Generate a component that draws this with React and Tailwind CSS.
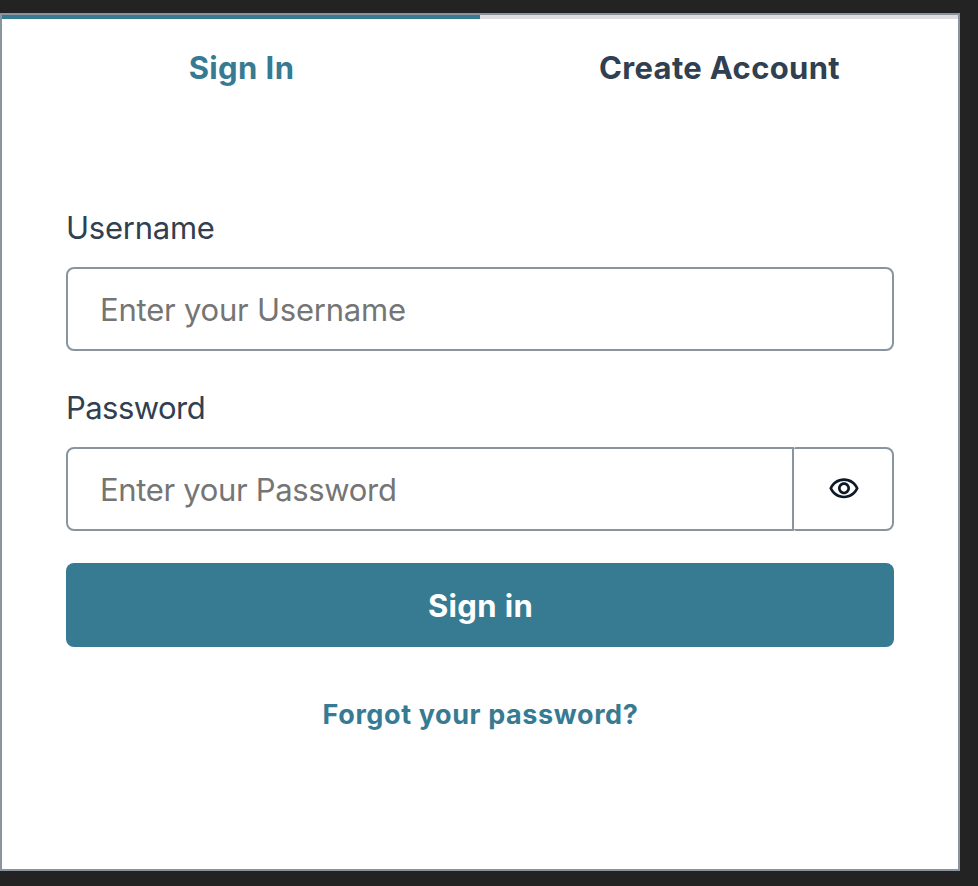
import { useState } from 'react';

function EyeIcon() {
  return (
    <svg className="size-8" viewBox="0 0 24 24" fill="currentColor" aria-hidden="true">
      <path d="M12 6c3.79 0 7.17 2.13 8.82 5.5C19.17 14.87 15.79 17 12 17s-7.17-2.13-8.82-5.5C4.83 8.13 8.21 6 12 6m0-2C7 4 2.73 7.11 1 11.5 2.73 15.89 7 19 12 19s9.27-3.11 11-7.5C21.27 7.11 17 4 12 4zm0 5c1.38 0 2.5 1.12 2.5 2.5S13.38 14 12 14s-2.5-1.12-2.5-2.5S10.62 9 12 9m0-2c-2.48 0-4.5 2.02-4.5 4.5S9.52 16 12 16s4.5-2.02 4.5-4.5S14.48 7 12 7z" />
    </svg>
  );
}

export default function App() {
  const [username, setUsername] = useState('');
  const [password, setPassword] = useState('');
  const [showPassword, setShowPassword] = useState(false);

  return (
    <div className="h-[886px] w-[978px] overflow-hidden bg-[#232323] pt-[13px] font-['Inter',sans-serif] text-[#304050]">
      <div className="h-[858px] w-[960px] border-2 border-[#89949f] bg-white">
        <div className="grid grid-cols-2 text-[31px] leading-12 font-bold" role="tablist">
          <button role="tab" className="h-[82px] border-t-4 border-[#377b92] pt-[19px] pl-[1px] tracking-[0.4px] text-[#377b92]">Sign In</button>
          <button role="tab" className="h-[82px] border-t-4 border-[#dcdde0] pt-[19px] pl-[1px] tracking-[0.34px]">Create Account</button>
        </div>

        <form className="flex flex-col px-16 pt-[107px]" onSubmit={e => e.preventDefault()}>
          <label className="text-[31px] leading-12 tracking-[-0.25px]" htmlFor="username">Username</label>
          <input
            id="username"
            className="mt-[15px] h-[84px] rounded-lg border-2 border-[#89949f] px-8 text-[31px] tracking-[-0.22px] outline-none placeholder:text-[#757575]"
            value={username}
            onChange={e => setUsername(e.target.value)}
            placeholder="Enter your Username"
          />

          <label className="mt-[33px] text-[31px] leading-12 tracking-[-0.55px]" htmlFor="password">Password</label>
          <div className="mt-[15px] flex h-[84px]">
            <input
              id="password"
              type={showPassword ? 'text' : 'password'}
              className="w-[728px] rounded-l-lg border-2 border-[#89949f] px-8 pt-[2px] text-[31px] tracking-[-0.33px] outline-none placeholder:text-[#757575]"
              value={password}
              onChange={e => setPassword(e.target.value)}
              placeholder="Enter your Password"
            />
            <button
              type="button"
              aria-label="Show password"
              className="flex w-[100px] items-center justify-center rounded-l-[2px] rounded-r-lg border-2 border-l-0 border-[#89949f] pl-[2px] text-[#0d1926]"
              onClick={() => setShowPassword(!showPassword)}
            >
              <EyeIcon />
            </button>
          </div>

          <button type="submit" className="mt-8 h-[84px] rounded-lg bg-[#377b92] pt-[2px] pl-[1px] text-[31px] font-bold tracking-[0.35px] text-white">
            Sign in
          </button>
          <button type="button" className="mt-[47px] self-center pl-[1px] text-[27px] leading-[42px] font-bold tracking-[0.6px] text-[#377b92]">
            Forgot your password?
          </button>
        </form>
      </div>
    </div>
  );
}
